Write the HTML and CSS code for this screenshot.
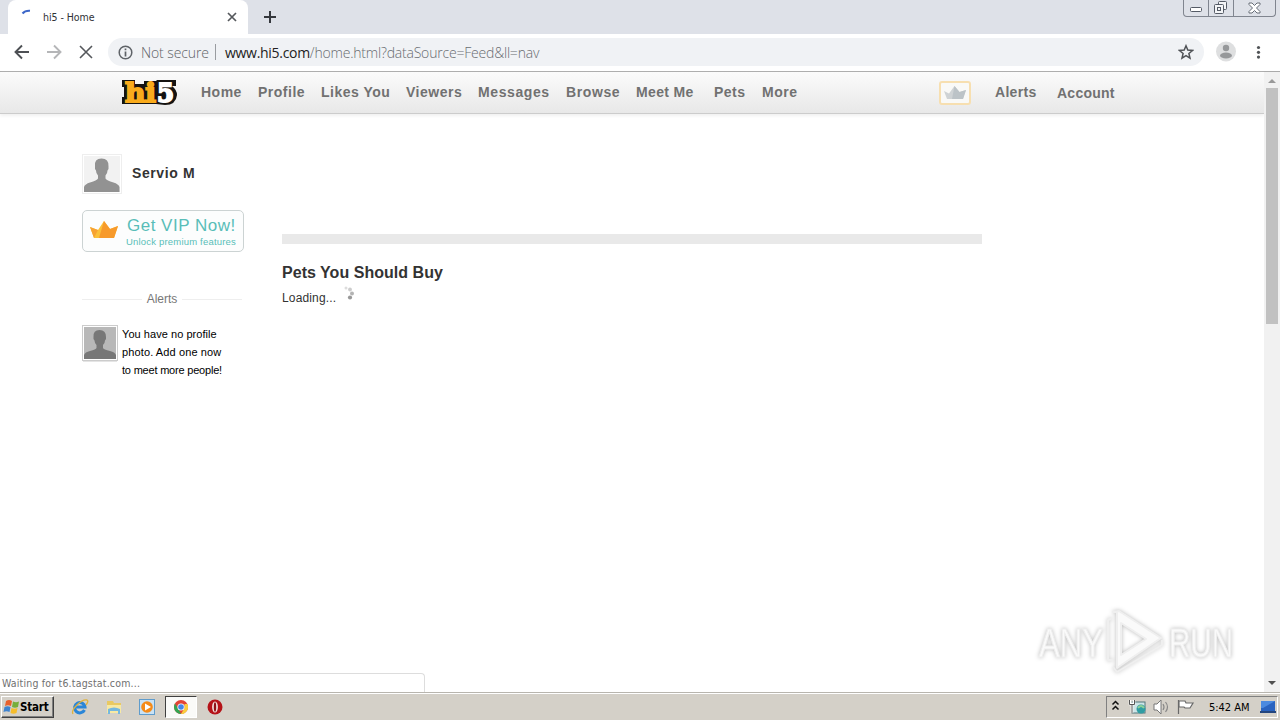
FILE: index.html
```html
<!DOCTYPE html>
<html lang="en">
<head>
<meta charset="utf-8">
<title>hi5 - Home</title>
<link rel="stylesheet" href="styles.css">
</head>
<body>
<header class="tabs">
  <div class="tab-prev"></div>
  <div class="tab">
    <svg class="spin" width="14" height="14" viewBox="0 0 14 14"><path d="M1.500 4.500Q4 1.500 9 1.800" fill="none" stroke="#3d67c9" stroke-width="2"/></svg>
    <span class="tab-title">hi5 - Home</span>
    <svg width="10" height="10" viewBox="0 0 10 10"><path d="M1 1l8 8M9 1L1 9" stroke="#55585c" stroke-width="1.700"/></svg>
  </div>
  <div class="tab-next"><svg width="12" height="12" viewBox="0 0 12 12"><path d="M6 0v12M0 6h12" stroke="#35383d" stroke-width="2"/></svg></div>
  <div class="winbtns">
    <div class="wb w1"><svg width="13" height="6" viewBox="0 0 13 6"><rect x=".5" y=".5" width="11" height="4" rx="1" fill="#fff" stroke="#555b66"/></svg></div>
    <div class="wb w2"><svg width="14" height="14" viewBox="0 0 14 14" fill="#f4f5f7" stroke="#555b66"><rect x="4.500" y=".5" width="8" height="8" rx="1"/><rect x=".5" y="3.500" width="9" height="9" rx="1"/><rect x="3.500" y="6.500" width="3" height="3"/></svg></div>
    <div class="wb w3"><svg width="13" height="12" viewBox="0 0 13 12"><path d="M1 1h3l2.500 2.500L9 1h3v1.500L8.500 6l3.500 3.500V11H9L6.500 8.500 4 11H1V9.500L4.500 6 1 2.500z" fill="#fff" stroke="#666c76"/></svg></div>
  </div>
</header>
<div class="toolbar">
  <svg class="tb-icons" width="108" height="37" viewBox="0 0 108 37" fill="none" stroke-width="1.900">
    <path d="M29 18H16M22 11.500L15.500 18l6.500 6.500" stroke="#4d5054"/>
    <path d="M47 18h13M54 11.500l6.500 6.500-6.500 6.500" stroke="#b5b6b8"/>
    <path d="M80 12l12 12M92 12L80 24" stroke="#55585c" stroke-width="1.600"/>
  </svg>
  <div class="omni">
    <svg class="info" width="15" height="15" viewBox="0 0 15 15"><circle cx="7.500" cy="7.500" r="6.300" fill="none" stroke="#5f6368" stroke-width="1.500"/><path d="M7.500 3.500v1.700M7.500 6.500v5" stroke="#5f6368" stroke-width="1.700"/></svg>
    <span class="secure">Not secure</span><span class="sep"></span>
    <span class="url"><b>www.hi5.com</b>/home.html?dataSource=Feed&amp;ll=nav</span>
    <svg class="star" width="16" height="16" viewBox="0 0 16 16"><path d="M8 1.800l1.800 4.300 4.700.4-3.600 3 1.100 4.600L8 11.700l-4 2.400 1.100-4.600-3.600-3 4.700-.4z" fill="none" stroke="#4f5256" stroke-width="1.500"/></svg>
  </div>
  <svg width="76" height="37" viewBox="0 0 76 37"><circle cx="22" cy="17.500" r="10" fill="#dedfe0"/><circle cx="22" cy="14" r="3.200" fill="#96989a"/><ellipse cx="22" cy="21.500" rx="6" ry="3" fill="#96989a"/><g fill="#505356"><circle cx="54.500" cy="13.500" r="1.600"/><circle cx="54.500" cy="18.300" r="1.600"/><circle cx="54.500" cy="23.100" r="1.600"/></g></svg>
</div>
<main class="view">
  <div class="page">
    <nav class="nav">
      <svg class="logo" width="56" height="28" viewBox="0 0 56 28">
        <path d="M0 1H13V5H22V2H34L35 1H54V7H50Q55 11 55 16Q54 26 43 26L34 25H0V18H2V8H0z" fill="#151311"/>
        <g class="logo-text"><text x="3" y="23" textLength="31" lengthAdjust="spacingAndGlyphs" fill="#f9ab1c" stroke="#f9ab1c">hi</text><text x="35" y="23" textLength="17" lengthAdjust="spacingAndGlyphs" fill="#fff" stroke="#fff">5</text></g>
      </svg>
      <div class="links"><span class="n1">Home</span><span class="n2">Profile</span><span class="n3">Likes You</span><span class="n4">Viewers</span><span class="n5">Messages</span><span class="n6">Browse</span><span class="n7">Meet Me</span><span class="n8">Pets</span><span>More</span></div>
      <div class="vip-badge"><svg width="22" height="14" viewBox="0 0 22 14"><path d="M0 5l5 2.500L10.500 0l5 6L22 4l-3 9H3z" fill="#cfd3d5"/><path d="M10.500 0l5 6L22 4l-3 9H8z" fill="#bcc3c7"/></svg></div>
      <span class="n-alerts">Alerts</span><span class="n-account">Account</span>
    </nav>
    <div class="cols">
      <aside class="side">
        <div class="user">
          <svg width="40" height="40" viewBox="0 0 40 40"><rect x=".5" y=".5" width="39" height="39" fill="#fff" stroke="#eee"/><path d="M2 2h36v36H2z" fill="#f2f2f2"/><path d="M2 38v-5q1-3 6-4.500 7-2 8-4v-3q-2-2-2-5-1.500-1-1-4Q12 4.500 19.500 4.500T26.500 12.500q.500 3-1 4 0 3-2 5v3q1 2 8 4 5 1.500 6 4.500v5z" fill="#929292"/></svg>
          <span class="name">Servio M</span>
        </div>
        <div class="vip">
          <svg width="28" height="18" viewBox="0 0 28 18"><path d="M0 6l8 3 6-9 6 8 8-3-4 12H4z" fill="#fbc03a"/><path d="M14 0l6 8 8-3-4 12H9z" fill="#f79a2b"/><path d="M0 6l8 3-4 8z" fill="#f7a332"/></svg>
          <div class="vip-text"><span class="vip-a">Get VIP Now!</span><span class="vip-b">Unlock premium features</span></div>
        </div>
        <div class="divider"><span>Alerts</span></div>
        <div class="alert">
          <svg width="36" height="37" viewBox="0 0 36 37"><path d="M1 36.500h34" stroke="#e4e4e4"/><rect x=".5" y=".5" width="35" height="35" fill="#fff" stroke="#ccc"/><path d="M2 2h32v32H2z" fill="#b8b8b8"/><path d="M2 34v-4q1-3 6-4 6-1.500 6.500-3v-3q-2-2-2-4.500-1.500-1-1-3.500Q11 5 17.500 5T24 12q.500 2.500-1 3.500 0 2.500-2 4.500v3q.500 1.500 7 3 5 1 6 4v4z" fill="#777"/></svg>
          <p><span class="l1">You have no profile</span><br><span class="l2">photo. Add one now</span><br><span class="l3">to meet more people!</span></p>
        </div>
      </aside>
      <section class="feed">
        <div class="bar"></div>
        <h2>Pets You Should Buy</h2>
        <div class="loading"><span>Loading...</span><svg width="14" height="16" viewBox="0 0 14 16"><circle cx="3" cy="2" r="1.500" fill="#ddd"/><circle cx="7" cy="3.500" r="1.900" fill="#ccc"/><circle cx="9" cy="7.500" r="2" fill="#b3b3b3"/><circle cx="7" cy="11.500" r="2.100" fill="#989898"/></svg></div>
      </section>
    </div>
  </div>
  <div class="scroll"><i class="up"></i><i class="thumb"></i><i class="down"></i></div>
  <div class="status">Waiting for t6.tagstat.com...</div>
  <svg class="mark" width="208" height="72" viewBox="0 0 208 72">
    <g class="mark-text"><text x="8" y="53" textLength="64" lengthAdjust="spacingAndGlyphs">ANY</text><text x="138" y="53" textLength="64" lengthAdjust="spacingAndGlyphs">RUN</text></g>
    <g class="mark-icon"><path d="M82 8L88 7L130 34 86 64V8zM90 19V51L115 35z" fill-rule="evenodd"/><path d="M81 14L77 16V56H82M82 63L86 68L131 41V36" fill="none"/></g>
  </svg>
</main>
<footer class="task">
  <div class="start"><svg width="17" height="16" viewBox="0 0 17 16"><path d="M3 2q3-2 6 0L8 7Q5 5.500 2 7z" fill="#e8602c"/><path d="M10 2.500q3 1.500 6 0L15 8q-3 1.500-6 0z" fill="#76ae3c"/><path d="M1.500 8q3-1.500 6 0l-1 5q-3-1.500-6 0z" fill="#3e83cf"/><path d="M8.500 9q3 1.500 6 0l-1 5q-3 1.500-6 0z" fill="#f6bd2b"/></svg><span>Start</span></div>
  <div class="quick">
    <svg class="qi" width="18" height="18" viewBox="0 0 18 18"><path d="M13.500 12A5.200 5.200 0 1 1 14 9H5" fill="none" stroke="#2a86d8" stroke-width="3"/><path d="M2 16Q0 13 6 7T16 2q2 1-1 5" fill="none" stroke="#e0b23c" stroke-width="1.300"/></svg>
    <svg class="qi" width="18" height="18" viewBox="0 0 18 18"><path d="M2 3h6l1 2h7v9H2z" fill="#e9c962"/><path d="M2 7h14v8H2z" fill="#f8e9a3"/><path d="M3 16v-5q6-3 12 0v5h-2v-3H5v3z" fill="#75b8df"/></svg>
    <svg class="qi" width="18" height="18" viewBox="0 0 18 18"><rect x="1.500" y="1.500" width="15" height="15" fill="#c9e2f5" stroke="#5f9ccc"/><circle cx="9" cy="9" r="5.800" fill="#f58b19"/><path d="M7 5.500l6 3.500-6 3.500z" fill="#fff"/></svg>
    <div class="active"><svg width="16" height="16" viewBox="0 0 16 16"><circle cx="8" cy="8" r="7" fill="#e24435"/><path d="M1.900 4.600L6 11l2 4A7 7 0 0 1 1.900 4.600" fill="#32a552"/><path d="M8 15l3.500-6V5h2.900A7 7 0 0 1 8 15" fill="#f9ce3d"/><circle cx="8" cy="8" r="3.600" fill="#fff"/><circle cx="8" cy="8" r="2.800" fill="#4386e8"/></svg></div>
    <svg class="opera" width="16" height="16" viewBox="0 0 16 16"><circle cx="8" cy="8" r="7.500" fill="#b51218"/><ellipse cx="8" cy="8" rx="2.900" ry="5.600" fill="#f3e3df"/><ellipse cx="8" cy="8" rx="1.200" ry="4.800" fill="#8f1116"/></svg>
  </div>
  <div class="tray">
    <svg width="90" height="20" viewBox="0 0 90 20">
      <path d="M5.500 7.500l3-3 3 3M5.500 12.500l3-3 3 3" fill="none" stroke="#111" stroke-width="1.500"/>
      <rect x="25" y="5" width="13" height="11" fill="#cde4e6" stroke="#50767d"/><circle cx="34" cy="12" r="4.500" fill="#309da3"/><path d="M31 11q3-4 6 0" fill="none" stroke="#8ed19a" stroke-width="2"/><path d="M23 3v4h4V3M25 7v9" fill="none" stroke="#fff" stroke-width="2.500"/><path d="M22.500 3v4.500h5V3M25 8v8" fill="none" stroke="#555"/>
      <path d="M47 7h3l4-4v14l-4-4h-3z" fill="#fff" stroke="#777"/><path d="M56 7q2 3 0 6M58.500 5q4 5 0 10" fill="none" stroke="#888" stroke-width="1.200"/>
      <path d="M71.500 3v14M72 4h6l1 2h7l-3 5h-5l-1-1h-5z" fill="#fff" stroke="#686868" stroke-width="1.200"/>
    </svg>
    <span class="clock">5:42 AM</span>
    <svg width="16" height="14" viewBox="0 0 16 14"><path d="M1 1h14v10H1z" fill="#2963c0"/><path d="M1 1h14L3 8H1z" fill="#4b8ae0"/><path d="M0 11h16v2H0z" fill="#23457e"/></svg>
  </div>
</footer>
</body>
</html>
```
FILE: styles.css
```css
* { box-sizing: border-box; }
body { margin: 0; width: 1280px; height: 720px; overflow: hidden; display: flex; flex-direction: column; font-family: "Liberation Sans", Arial, sans-serif; background: #fff; }
svg { display: block; flex: none; }
span { white-space: nowrap; }
.tabs { height: 34px; flex: none; display: flex; background: #dee1e8; }
.tab-prev { width: 8px; border-bottom-right-radius: 8px; background: #dee1e8; }
.tab { width: 240px; display: flex; align-items: center; background: #fff; border-radius: 8px 8px 0 0; padding: 0 11px 0 13px; }
.tab-title { margin-left: 8px; flex: 1; font: 10.5px "DejaVu Sans Condensed", "DejaVu Sans", sans-serif; font-stretch: condensed; letter-spacing: -.05px; color: #303236; }
.spin { margin-top: -2px; }
.tab-next { flex: 1; padding: 11px 0 0 16px; }
.winbtns { display: flex; height: 17px; width: 93px; margin-right: 4px; border: 1px solid #80858f; border-top: 0; border-radius: 0 0 4px 4px; }
.wb { display: flex; justify-content: center; align-items: center; border-right: 1px solid #80858f; }
.w1 { width: 25px; padding-top: 4px; } .w2 { width: 25px; } .w3 { flex: 1; border: 0; }
.toolbar { height: 38px; flex: none; display: flex; border-bottom: 1px solid #aaa; }
.omni { width: 1096px; height: 28px; margin-top: 4px; border-radius: 14px; background: #f0f2f5; display: flex; align-items: center; padding: 0 10px; font: 300 14px "Open Sans", sans-serif; color: #686c70; }
.secure { margin-left: 8px; width: 67px; letter-spacing: -.1px; color: #5f6367; }
.sep { width: 1px; height: 16px; margin: 0 9px 0 7px; background: #999ca0; }
.url { flex: 1; letter-spacing: -.2px; }
.url b { font-weight: 400; color: #222; letter-spacing: -.3px; }
.view { position: relative; flex: 1; min-height: 0; display: flex; }
.page { width: 1264px; }
.nav { height: 42px; display: flex; padding-left: 122px; border-bottom: 1px solid #ccc; background: linear-gradient(#fbfbfb, #e8e8e8); box-shadow: 0 2px 3px #f1f1f1; color: #717171; font-weight: 700; font-size: 14px; line-height: 16px; letter-spacing: .5px; }
.logo { margin-top: 7px; }
.logo-text { font: 700 26px "DejaVu Serif", serif; letter-spacing: 0; stroke-width: 2px; }
.links { display: flex; margin: 12px 0 0 23px; width: 738px; }
.n1 { width: 57px; } .n2 { width: 63px; } .n3 { width: 85px; } .n4 { width: 72px; } .n5 { width: 88px; letter-spacing: .6px; } .n6 { width: 70px; letter-spacing: .6px; } .n7 { width: 78px; letter-spacing: .35px; } .n8 { width: 48px; }
.vip-badge { width: 32px; height: 24px; margin-top: 9px; border: 2px solid #f7dfb0; border-radius: 3px; background: #f9f9f7; display: flex; justify-content: center; align-items: center; }
.n-alerts { margin: 12px 0 0 24px; width: 62px; letter-spacing: .3px; } .n-account { margin-top: 13px; letter-spacing: .25px; }
.cols { display: flex; padding-left: 82px; }
.side { width: 200px; padding-top: 40px; }
.user { display: flex; align-items: center; height: 40px; gap: 10px; }
.name { font-weight: 700; font-size: 14px; letter-spacing: .6px; color: #333; margin-top: -2px; }
.vip { width: 162px; height: 42px; margin-top: 16px; border: 1px solid #ccd3d3; border-radius: 5px; display: flex; padding: 0 0 0 7px; align-items: center; background: #fcfdfd; }
.vip > svg { margin-top: -2px; }
.vip-text { margin: 0 0 0 8px; display: flex; flex-direction: column; color: #59bdb8; }
.vip-a { font-size: 17px; line-height: 20px; letter-spacing: .5px; padding-left: 1px; }
.vip-b { font-size: 9.500px; line-height: 11px; letter-spacing: .19px; }
.divider { width: 160px; height: 16px; margin-top: 39px; display: flex; align-items: center; gap: 5px; font-size: 12px; color: #777; }
.divider::before, .divider::after { content: ""; flex: 1; height: 1px; background: #eee; }
.alert { display: flex; margin-top: 18px; gap: 4px; }
.alert p { margin: 0; font-size: 11px; line-height: 18px; color: #000; }
.l1 { letter-spacing: .05px; } .l2 { letter-spacing: .12px; } .l3 { letter-spacing: -.2px; }
.feed { width: 700px; padding-top: 120px; color: #333; }
.bar { height: 10px; background: #e9e9e9; }
.feed h2 { margin: 19px 0 0; font-size: 16px; line-height: 20px; letter-spacing: .03px; }
.loading { display: flex; font-size: 12px; line-height: 24px; letter-spacing: .15px; margin-top: 3px; gap: 7px; }
.scroll { width: 16px; background: #f1f1f1; display: flex; flex-direction: column; align-items: center; }
.up { margin-top: 7px; border: 4px solid transparent; border-top: 0; border-bottom: 4px solid #999; }
.thumb { width: 12px; height: 236px; margin-top: 5px; background: #c1c1c1; }
.down { margin: auto 0 7px; border: 4px solid transparent; border-bottom: 0; border-top: 4px solid #505050; }
.status { position: absolute; left: 0; bottom: 0; width: 425px; height: 19px; padding-left: 2px; border: 1px solid #ddd; border-left: 0; border-bottom: 0; border-top-right-radius: 4px; background: #fff; color: #707070; font: 10.5px/18px "DejaVu Sans Condensed", "DejaVu Sans", sans-serif; font-stretch: condensed; letter-spacing: .18px; }
.mark { position: absolute; left: 1031px; top: 532px; overflow: visible; filter: drop-shadow(0 0 2px #bbb); fill: #fafafa; stroke: #efefef; }
.mark-text { font: 41px "Liberation Sans", sans-serif; stroke-width: 1.2px; }
.mark-icon { stroke-width: 2px; stroke-linejoin: round; }
.task { height: 28px; flex: none; border-top: 1px solid #b8b5ae; box-shadow: inset 0 1px #fff; background: #d4d0c8; display: flex; padding: 3px 2px 2px 1px; }
.start { width: 53px; height: 22px; border: 1px solid #fff; border-right-color: #404040; border-bottom-color: #404040; box-shadow: inset -1px -1px #808080; display: flex; align-items: center; padding-left: 1px; font: 700 11.5px "DejaVu Sans Condensed", "DejaVu Sans", sans-serif; font-stretch: condensed; letter-spacing: -.2px; }
.quick { display: flex; align-items: center; flex: 1; height: 22px; padding-left: 17px; }
.qi { margin-right: 15.5px; }
.qi:nth-child(3) { margin-right: 9px; }
.active { width: 32px; height: 22px; background: #fafaf8; border: 1px solid #404040; border-right-color: #fff; border-bottom-color: #fff; display: flex; justify-content: center; align-items: center; }
.opera { margin-left: 10px; }
.tray { width: 172px; height: 22px; border: 1px solid #808080; border-right-color: #fff; border-bottom-color: #fff; display: flex; align-items: center; }
.clock { font: 11px "DejaVu Sans Condensed", "DejaVu Sans", sans-serif; font-stretch: condensed; letter-spacing: -.02px; width: 51px; margin-left: 12px; }
```
